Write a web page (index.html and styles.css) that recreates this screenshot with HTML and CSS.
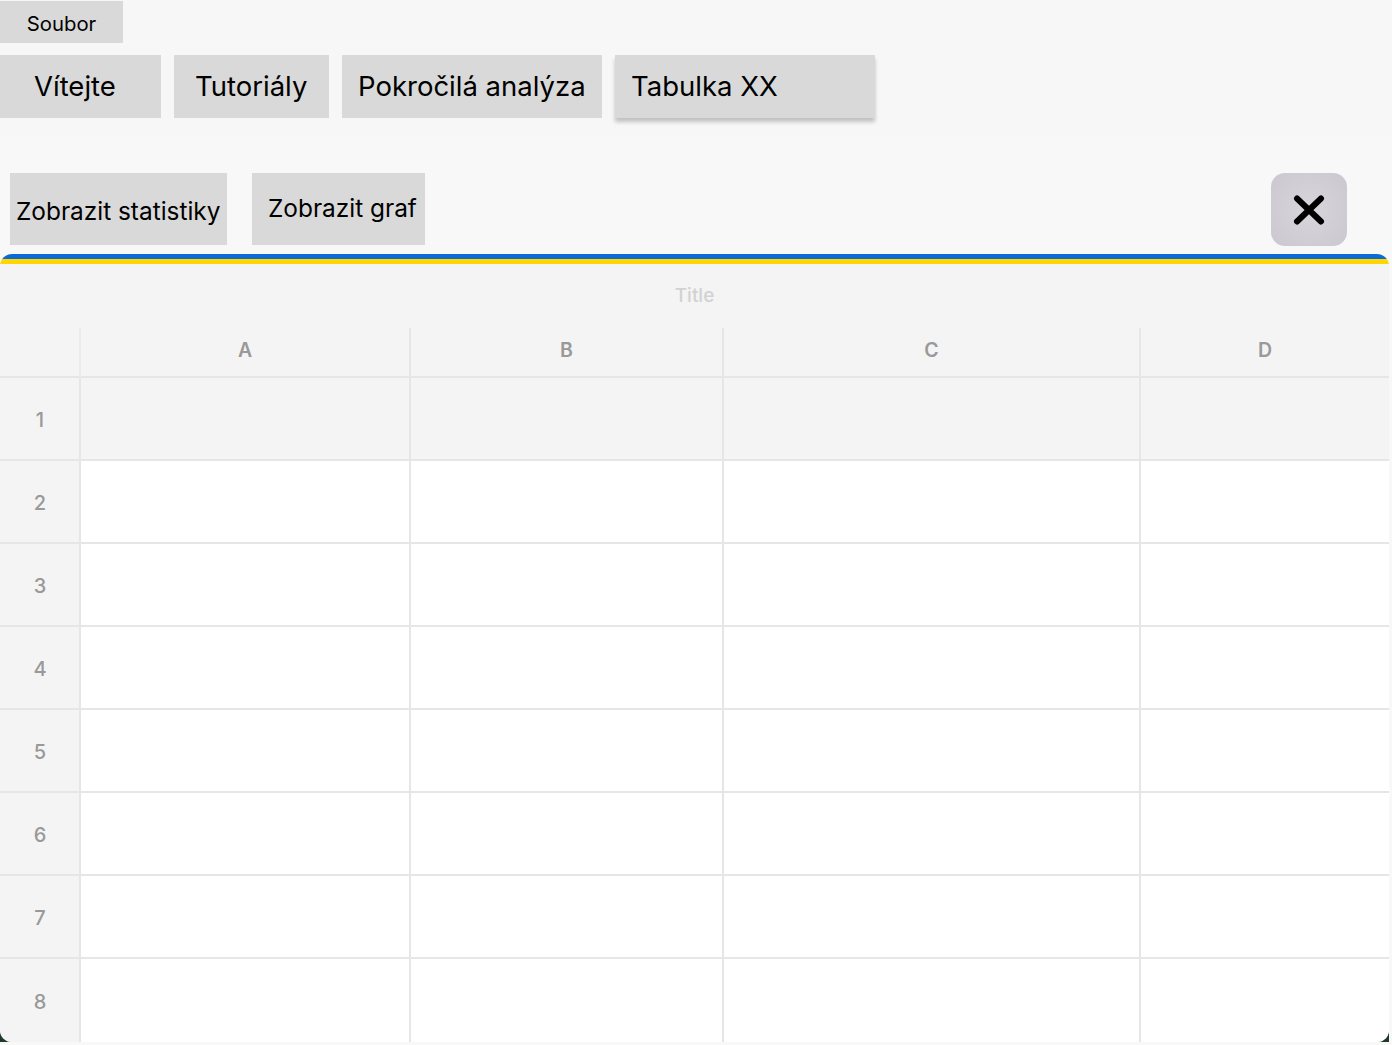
FILE: index.html
```html
<!DOCTYPE html>
<html lang="cs">
<head>
<meta charset="utf-8">
<title>Tabulka</title>
<link rel="stylesheet" href="styles.css">
</head>
<body>
<div class="top">
  <div class="menu"><button class="menu-btn">Soubor</button></div>
  <div class="tabs">
    <button class="tab tab-1">Vítejte</button>
    <button class="tab tab-2">Tutoriály</button>
    <button class="tab tab-3">Pokročilá analýza</button>
    <button class="tab tab-4 active">Tabulka XX</button>
  </div>
</div>
<div class="toolbar">
  <button class="tool tool-stats">Zobrazit statistiky</button>
  <button class="tool tool-graph">Zobrazit graf</button>
  <button class="close" aria-label="Zavřít">
    <svg width="34" height="30" viewBox="0 0 34 30"><path d="M5 3.5 L29 26.5 M29 3.5 L5 26.5" stroke="#000" stroke-width="6" stroke-linecap="round" fill="none"/></svg>
  </button>
</div>
<div class="panel-wrap">
  <div class="panel">
    <div class="stripe"></div>
    <div class="title">Title</div>
    <div class="grid">
      <div class="cell corner"></div>
      <div class="cell colh">A</div>
      <div class="cell colh">B</div>
      <div class="cell colh">C</div>
      <div class="cell colh last">D</div>

      <div class="cell rowh">1</div><div class="cell shade"></div><div class="cell shade"></div><div class="cell shade"></div><div class="cell shade last"></div>
      <div class="cell rowh">2</div><div class="cell"></div><div class="cell"></div><div class="cell"></div><div class="cell last"></div>
      <div class="cell rowh">3</div><div class="cell"></div><div class="cell"></div><div class="cell"></div><div class="cell last"></div>
      <div class="cell rowh">4</div><div class="cell"></div><div class="cell"></div><div class="cell"></div><div class="cell last"></div>
      <div class="cell rowh">5</div><div class="cell"></div><div class="cell"></div><div class="cell"></div><div class="cell last"></div>
      <div class="cell rowh">6</div><div class="cell"></div><div class="cell"></div><div class="cell"></div><div class="cell last"></div>
      <div class="cell rowh">7</div><div class="cell"></div><div class="cell"></div><div class="cell"></div><div class="cell last"></div>
      <div class="cell rowh bottom">8</div><div class="cell bottom"></div><div class="cell bottom"></div><div class="cell bottom"></div><div class="cell last bottom"></div>
    </div>
  </div>
</div>
</body>
</html>
```

FILE: styles.css
```css
* { box-sizing: border-box; }
html, body { margin: 0; padding: 0; }
body {
  background: #f8f8f8;
  font-family: Inter, "Noto Sans", sans-serif;
  color: #000;
  width: 1392px;
  height: 1045px;
  overflow: hidden;
}
button {
  font-family: inherit;
  border: none;
  background: #d9d9d9;
  color: #000;
  padding: 0;
  margin: 0;
  cursor: pointer;
}
.top { height: 137px; background: #f7f7f7; }
.menu { padding-top: 1px; height: 55px; }
.menu-btn {
  width: 123px;
  height: 42px;
  font-size: 20.3px;
  padding-top: 3px;
}
.tabs {
  display: flex;
  gap: 13px;
  height: 63px;
}
.tab {
  height: 63px;
  font-size: 27.5px;
  text-align: left;
  padding-bottom: 1px;
}
.tab-1 { width: 161px; padding-left: 34px; }
.tab-2 { width: 155px; padding-left: 21px; }
.tab-3 { width: 260px; padding-left: 16px; }
.tab-4 { width: 260px; padding-left: 16px; box-shadow: 0 4px 4px rgba(0,0,0,0.22); }

.toolbar {
  display: flex;
  align-items: flex-start;
  padding: 36px 45px 0 10px;
  height: 117px;
}
.tool {
  height: 72px;
  font-size: 24.4px;
  text-align: left;
}
.tool-stats { width: 217px; padding: 4px 0 0 6px; }
.tool-graph { width: 173px; margin-left: 25px; padding: 0 0 2px 16px; }
.close {
  margin-left: auto;
  width: 76px;
  height: 73px;
  border-radius: 14px;
  background: radial-gradient(circle at 50% 50%, #d8d5dc 0%, #cbc7d0 100%);
  display: flex;
  align-items: center;
  justify-content: center;
}
.close svg { display: block; margin-top: 1px; }

.panel-wrap {
  width: 1389px;
  height: 788px;
  background: linear-gradient(to bottom, transparent 0, transparent 760px, #1f3a27 760px);
  border-radius: 12px 12px 0 0;
}
.panel {
  width: 1389px;
  height: 788px;
  background: #f4f4f4;
  border-radius: 12px;
  overflow: hidden;
}
.stripe {
  height: 10px;
  background: linear-gradient(to bottom, #0b6ad8 0, #0b6ad8 5px, #ffd600 5px, #ffd600 10px);
}
.title {
  height: 64px;
  display: flex;
  align-items: center;
  justify-content: center;
  font-size: 19px;
  font-weight: 500;
  color: #d2d2d2;
  padding-bottom: 2px;
}
.grid {
  display: grid;
  grid-template-columns: 81px 330px 313px 417px 248px;
  grid-template-rows: 50px repeat(8, 83px);
}
.cell {
  border-right: 2px solid #e6e6e6;
  border-bottom: 2px solid #e6e6e6;
  background: #fff;
}
.cell.last { border-right: none; }
.cell.bottom { border-bottom: none; }
.corner, .colh, .rowh, .shade { background: #f4f4f4; }
.colh, .rowh {
  display: flex;
  align-items: center;
  justify-content: center;
  color: #999;
  font-size: 19.5px;
  font-weight: 500;
}
.colh { padding-bottom: 5px; font-weight: 600; }
.rowh { padding-left: 1px; padding-top: 2px; font-size: 20px; }
.corner { border-right-color: #ebebeb; }
```
